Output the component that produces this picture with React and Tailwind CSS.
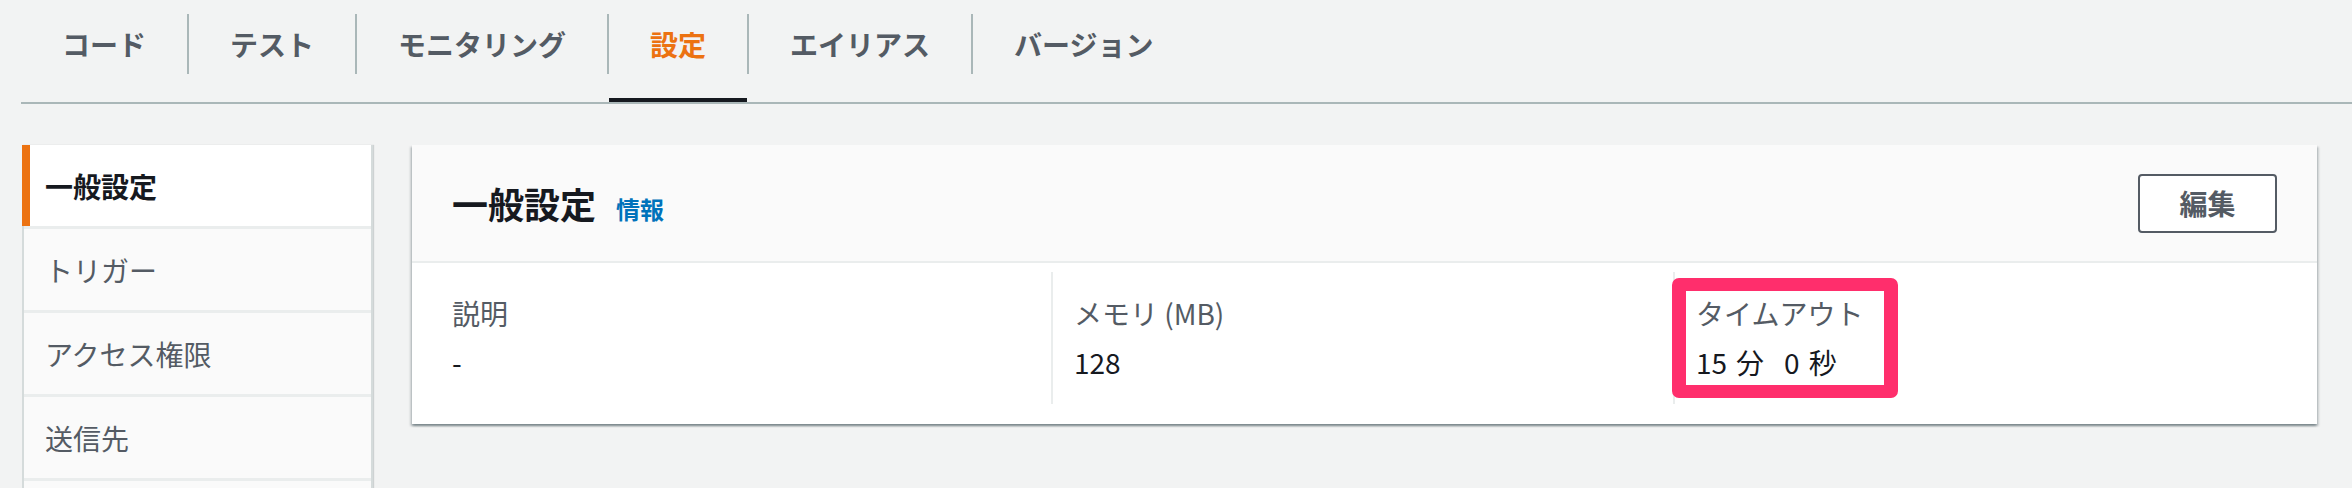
import React from "react";

const FONT = { fontFamily: '"Noto Sans CJK JP", "Noto Sans", sans-serif' };

const tabs = ["コード", "テスト", "モニタリング", "設定", "エイリアス", "バージョン"];
const navItems = ["一般設定", "トリガー", "アクセス権限", "送信先", ""];

export default function App() {
  return (
    <div
      className="w-[2352px] h-[488px] overflow-hidden bg-[#f2f3f3] text-[#16191f]"
      style={FONT}
    >
      {/* Tabs */}
      <div className="ml-[21px] flex border-b-2 border-[#aab7b8]">
        {tabs.map((t, i) => (
          <React.Fragment key={t}>
            {i > 0 && <div className="mt-[14px] h-[60px] w-[2px] bg-[#aab7b8]" />}
            <div
              className={
                "flex flex-col pt-[14px] border-b-4 " +
                (t === "設定" ? "border-[#16191f]" : "border-transparent")
              }
            >
              <div
                className={
                  "h-[60px] px-[41px] flex items-center text-[28px] leading-[40px] font-bold " +
                  (t === "設定" ? "text-[#ec7211]" : "text-[#545b64]")
                }
              >
                {t}
              </div>
              <div className="h-[24px]" />
            </div>
          </React.Fragment>
        ))}
      </div>

      {/* Content */}
      <div className="mt-[41px] ml-[22px] flex items-start gap-[39px]">
        {/* Side nav */}
        <div className="w-[351px] flex flex-col gap-[3px] bg-[#eaeded] border-x-2 border-[#d5dbdb] shadow-[1px_0_1px_0_rgba(0,28,36,0.15)]">
          {navItems.map((n, i) => (
            <div
              key={i}
              className={
                "relative h-[81px] flex items-center pl-[21px] text-[28px] leading-[40px] " +
                (i === 0 ? "bg-white font-bold text-[#16191f]" : "bg-[#fafafa] text-[#545b64]")
              }
            >
              {i === 0 && (
                <div className="absolute left-[-2px] top-0 bottom-0 w-[8px] bg-[#ec7211]" />
              )}
              {n}
            </div>
          ))}
        </div>

        {/* Panel */}
        <div className="w-[1905px] bg-white shadow-[0_2px_2px_0_rgba(0,28,36,0.3),2px_2px_2px_0_rgba(0,28,36,0.15),-2px_2px_2px_0_rgba(0,28,36,0.15)]">
          <div className="h-[118px] bg-[#fafafa] border-b-2 border-[#eaeded] flex items-center justify-between px-[40px]">
            <div className="flex items-baseline gap-[20px]">
              <span className="text-[36px] leading-[48px] font-bold text-[#16191f]">一般設定</span>
              <span className="text-[24px] leading-[32px] font-bold text-[#0073bb]">情報</span>
            </div>
            <button className="w-[139px] h-[59px] flex items-center justify-center border-2 border-[#545b64] rounded-[4px] bg-white text-[28px] font-bold text-[#545b64]">
              編集
            </button>
          </div>
          <div className="flex pl-[40px] pt-[9px] pb-[20px] text-[28px] leading-[40px]">
            <div className="w-[599px] h-[132px] pt-[21px]">
              <div className="text-[#545b64]">説明</div>
              <div className="mt-[9px] text-[#16191f]">-</div>
            </div>
            <div className="w-[622px] h-[132px] pt-[21px] pl-[21px] border-l-2 border-[#eaeded]">
              <div className="text-[#545b64]">メモリ (MB)</div>
              <div className="mt-[9px] text-[#16191f]">128</div>
            </div>
            <div className="relative flex-1 h-[132px] pt-[21px] pl-[21px] border-l-2 border-[#eaeded]">
              <div className="text-[#545b64]">タイムアウト</div>
              <div className="mt-[9px] flex text-[#16191f]">
                <span>15</span>
                <span className="ml-[9px]">分</span>
                <span className="ml-[20px]">0</span>
                <span className="ml-[9px]">秒</span>
              </div>
              <div className="absolute left-[-3px] top-[6px] w-[226px] h-[120px] border-x-[14px] border-y-[13px] border-[#ff2e6c] rounded-[7px]" />
            </div>
          </div>
        </div>
      </div>
    </div>
  );
}
